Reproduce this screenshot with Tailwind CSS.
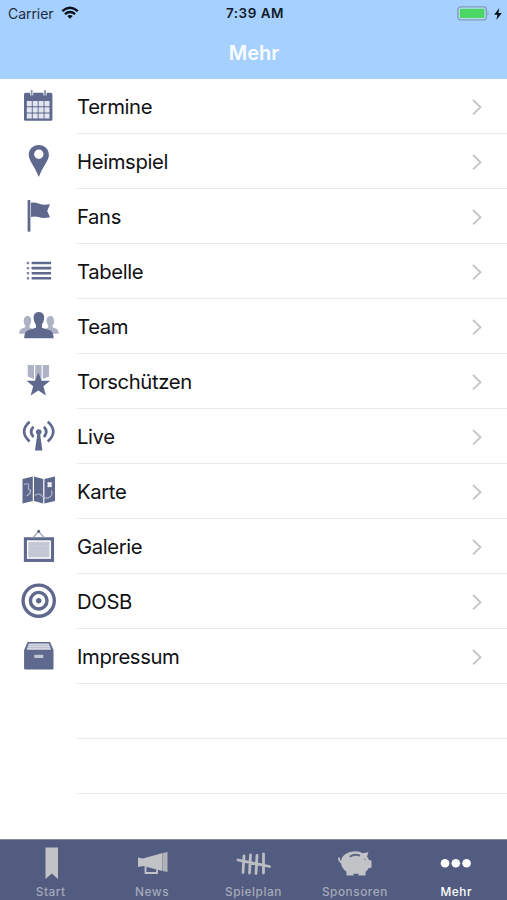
<!DOCTYPE html>
<html lang="de">
<head>
<meta charset="utf-8">
<title>Mehr</title>
<script src="https://cdn.jsdelivr.net/npm/@tailwindcss/browser@4"></script>
</head>
<body class="bg-white">
<div class="w-[507px] h-[900px] flex flex-col overflow-hidden bg-white font-['Inter',sans-serif] text-[#111114]">
  <header class="h-[79px] shrink-0 bg-[#a6d0ff]">
    <div class="h-[27px] grid grid-cols-3 items-center pl-[8px] pr-[5px]">
      <div class="flex items-center gap-[7px] pt-[1px] text-[14px] leading-none tracking-[-0.05px] text-[#1c2c40]">
        <span>Carrier</span>
        <svg class="w-[18px] h-[14px] -mt-[2px]" viewBox="0 0 18 14" fill="none" stroke="#08101a" stroke-width="2.3"><path d="M1.2 5.1Q9-1.6 16.8 5.1M3.9 8.1Q9 3.8 14.1 8.1"/><path d="M6.3 10.1Q9 8 11.7 10.1L9 12.8Z" fill="#08101a" stroke="none"/></svg>
      </div>
      <div class="pt-[1px] text-center text-[13.5px] leading-none font-semibold tracking-[0.5px] text-[#101a28]">7:39 AM</div>
      <div class="flex justify-end items-center gap-[4px]">
        <svg class="w-[33px] h-[15px]" viewBox="0 0 33 15"><rect x=".9" y=".9" width="28.5" height="13" rx="3" fill="#b9dcf5" stroke="#7d9abb" stroke-width="1.3"/><rect x="2.8" y="2.8" width="24.7" height="9.2" rx="1.2" fill="#4bd763"/><path d="M30.6 5.2Q32.6 7.4 30.6 9.6Z" fill="#7d9abb"/></svg>
        <svg class="w-[8px] h-[12px]" viewBox="0 0 8 12"><path d="M5.3 0 .2 6.8H3.4L2.4 12 7.8 4.9H4.4Z" fill="#08101a"/></svg>
      </div>
    </div>
    <h1 class="mt-[13px] pl-[1px] text-center text-[20px] leading-[26px] font-semibold text-[#fafdff]">Mehr</h1>
  </header>

  <main class="flex-1 min-h-0 overflow-hidden">
    <ul id="list" class="text-[20.3px] leading-[26px] tracking-[-0.38px]"></ul>
  </main>

  <nav class="h-[61px] shrink-0 bg-[#525c80] border-t border-[#858ba2] grid grid-cols-5 text-center text-[11.8px] leading-[16px] font-medium tracking-[0.55px] text-[#a6aaba]">
    <div class="flex flex-col items-center"><svg class="w-[48px] h-[44px]" viewBox="0 0 48 44"><path d="M18.5 7.5H31V39L24.8 33.5 18.5 39Z" fill="#c2c3c6"/></svg><span>Start</span></div>
    <div class="flex flex-col items-center"><svg class="w-[48px] h-[44px]" viewBox="0 0 48 44"><path d="M10 17.5 15 18.5 34.5 13V31L15 26 10 27Z" fill="#c2c3c6"/><path d="M34.8 13 39.5 12V32L34.8 31Z" fill="#b2b3b9"/><path d="M17.5 26.5V33H29V28" fill="none" stroke="#c2c3c6" stroke-width="1.8"/></svg><span>News</span></div>
    <div class="flex flex-col items-center"><svg class="w-[48px] h-[44px]" viewBox="0 0 48 44" fill="none" stroke="#bcbdc3" stroke-width="2.8" stroke-linecap="round"><path d="M15 16 14 32.500M21.500 15 20.500 33M28 15.500 27 33.500M34.500 14 34.500 33M9 20 40.500 26.500"/></svg><span>Spielplan</span></div>
    <div class="flex flex-col items-center"><svg class="w-[48px] h-[44px]" viewBox="0 0 48 44"><path d="M7.800 17.500Q8 22 12 23.500" fill="none" stroke="#c2c3c6" stroke-width="1.8"/><path d="M10 22C10 15.500 16.500 11.200 25 11.200Q29 11.200 31.500 13.200L37.500 12.200 36 16.500Q37.300 18 38 20L40.500 20.500V27.500L37.500 28.200Q36.300 30.500 34.500 32V35.500H27.500V33.800H22.500V35.500H15.500V31.800Q10 28 10 22Z" fill="#c2c3c6"/><path d="M18.800 16.700Q23.500 13.300 29 15.600" fill="none" stroke="#5d6685" stroke-width="2"/><circle cx="34" cy="19.5" r=".8" fill="#7d8398"/></svg><span>Sponsoren</span></div>
    <div class="flex flex-col items-center text-white"><svg class="w-[48px] h-[44px]" viewBox="0 0 48 44" fill="#fff"><circle cx="13" cy="23.300" r="4.3"/><circle cx="23.8" cy="23.300" r="4.3"/><circle cx="34.6" cy="23.300" r="4.3"/></svg><span>Mehr</span></div>
  </nav>
</div>

<script>
const c = '#5f688d', l = '#adb2c4';
const items = [
  ['Termine', `<rect x="24" y="13.8" width="28.4" height="28" rx="1.6" fill="${c}"/><g fill="#e2e5ef">${[0,1,2].map(r => [0,1,2,3].map(k => `<rect x="${26.8 + k * 5.9}" y="${22 + r * 6.2}" width="5" height="5.2" rx=".5"/>`).join('')).join('')}</g><path d="M31.6 11V16.3M45 11V16.3" stroke="#fff" stroke-width="3.2"/><path d="M31.6 11V16.3M45 11V16.3" stroke="#8a91ab" stroke-width="1.8"/>`],
  ['Heimspiel', `<path fill="${c}" fill-rule="evenodd" d="M38.8 11C33 11 28.7 15.3 28.7 21C28.7 26.5 35 33 38.8 43C42.6 33 48.9 26.5 48.9 21C48.9 15.3 44.6 11 38.8 11ZM38.8 15.6A4.7 4.7 0 1 1 38.8 25A4.7 4.7 0 1 1 38.8 15.6Z"/>`],
  ['Fans', `<rect x="27.6" y="11" width="2.8" height="31.8" rx=".8" fill="${c}"/><path fill="${c}" d="M31 13.7Q35 12.800 38.500 14.500Q43 16.500 50 15.300L47.200 22L50 28.300Q43 29.800 38.500 28Q35 27 31 28Z"/>`],
  ['Tabelle', `<g fill="${c}">${[19, 24.1, 29.2, 34.3].map(y => `<rect x="26.8" y="${y - 1.2}" width="2.4" height="2.4" rx=".6" opacity=".8"/><rect x="31.6" y="${y - 1.3}" width="19.5" height="2.6" rx=".4"/>`).join('')}</g>`],
  ['Team', `<g fill="${l}"><path d="M27.3 17C30.500 17 31.500 19.500 31.200 22.500Q30.800 25 29.600 26.500V28.5L33 30V34.8H19.2Q19.2 30.8 21.5 29.7L25.200 28.2V26.5Q23.8 25 23.700 22.500C23.600 19.5 24.8 17 27.300 17Z"/><path d="M50.5 17C47.300 17 46.300 19.500 46.600 22.500Q47 25 48.200 26.500V28.500L44.800 30V34.800H58.600Q58.600 30.800 56.300 29.700L52.600 28.200V26.500Q54 25 54.100 22.500C54.200 19.500 53 17 50.500 17Z"/></g><path fill="${c}" d="M38.9 13C43 13 44.500 16 44.100 19.700Q43.800 23.500 41.900 25.500V28.700L50.300 31.600Q53.400 33 53.700 39.300H24.100Q24.400 33 27.500 31.600L35.900 28.700V25.500Q34 23.500 33.700 19.700C33.300 16 34.800 13 38.900 13Z"/>`],
  ['Torschützen', `<g fill="${l}"><path d="M27.7 11H34V25L27.700 22.500Z"/><path d="M35.2 11H41.600V26H35.200Z"/><path d="M42.800 11H49V22.500L42.800 25Z"/></g><path fill="${c}" d="M38.300 18.500L41.500 26.800H50.100L43.400 32.300L45.900 41.600L38.300 36.500L30.700 41.600L33.200 32.300L26.500 26.800H35.100Z"/>`],
  ['Live', `<circle cx="38.7" cy="23" r="2.8" fill="${c}"/><path fill="${c}" d="M37.3 25H40.100L42.400 41.500H35Z"/><g fill="none" stroke="${c}" stroke-width="2.7"><path d="M33.5 17.8Q28.8 22.5 33.5 28M43.900 17.800Q48.600 22.500 43.900 28"/><path d="M29.600 12.800Q18.600 22.500 29.600 32.600M47.800 12.800Q58.800 22.500 47.800 32.600"/></g>`],
  ['Karte', `<g fill="${c}"><path d="M22.500 15L32.800 12.600V37L22.500 39.500Z"/><path d="M34 12.600L43.200 15V39.500L34 37Z"/><path d="M44.400 15L55 12.600V37L44.400 39.500Z"/></g><path d="M24 20.500Q28.800 18.600 28.800 21.500Q27 25.500 30.500 26.300Q31 30 26.500 31.800M35 31.500Q39 28 42.500 32.500Q46 35.500 50 33Q53 31 51.500 26.500" fill="none" stroke="#b7bbcc" stroke-width="1.1"/><path d="M47.800 18.500L51.500 22.800M51.500 18.500L47.800 22.800" stroke="#f1f2f7" stroke-width="2.2"/>`],
  ['Galerie', `<rect x="25.4" y="19.800" width="27.100" height="21.600" fill="#fff" stroke="${c}" stroke-width="3.100"/><rect x="28.300" y="22.800" width="21.200" height="15.600" fill="#c4c8d5"/><path d="M28.500 27.500H49M28.500 31.500H49" stroke="#cacdd9" stroke-width=".9"/><path d="M33 18.500L38.600 12.500L44.200 18.500" fill="none" stroke="#999fb5" stroke-width="1.1"/><circle cx="38.600" cy="12.200" r="1.500" fill="${c}"/>`],
  ['DOSB', `<g fill="none" stroke="${c}"><circle cx="38.7" cy="26.7" r="15.600" stroke-width="3.400"/><circle cx="38.7" cy="26.7" r="8.300" stroke-width="3.400"/></g><circle cx="38.7" cy="26.7" r="2.700" fill="${c}"/>`],
  ['Impressum', `<path fill="${c}" d="M27.600 13H50.100L53.500 21V39.500Q53.500 40.400 52.600 40.400H25Q24.100 40.400 24.100 39.500V21Z"/><path fill="#d8dbe6" d="M28.800 14.500H48.900L51 20.800H26.700Z"/><path d="M28.800 16.400H49M28 18.600H49.800" stroke="#a9aec1" stroke-width=".7"/><rect x="34.300" y="25.700" width="9" height="3.200" rx=".6" fill="#c2c6d4"/>`],
];
const row = (name, art) => `<li class="h-[55px] flex items-center">
  <svg class="w-[42px] h-[55px] ml-[18px] shrink-0" viewBox="18 0 42 55">${art}</svg>
  <div class="ml-[17px] flex-1 h-[55px] border-b border-[#eaeaec] flex items-center justify-between pt-[1px] pr-[24px]"><span class="pt-[1px]">${name}</span>${name ? '<svg class="w-[12px] h-[18px]" viewBox="0 0 12 18" fill="none" stroke="#c6c6ca" stroke-width="1.9"><path d="M2 2L9.500 9.200L2 16.400"/></svg>' : ''}</div></li>`;
document.getElementById('list').innerHTML = items.map(i => row(...i)).join('') + row('', '') + row('', '');
</script>
</body>
</html>
